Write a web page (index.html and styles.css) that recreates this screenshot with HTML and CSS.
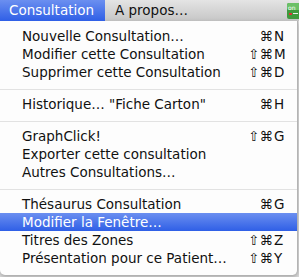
FILE: index.html
```html
<!DOCTYPE html>
<html>
<head>
<title>Menu Consultation</title>
<link rel="stylesheet" href="styles.css">
</head>
<body>

<div class="menubar">
  <span class="menu-title active">Consultation</span>
  <span class="menu-title">A propos…</span>
  <span class="app-icon">
    <svg width="12" height="16" viewBox="0 0 12 16">
      <rect x="0" y="0" width="14" height="16" rx="2" fill="#3f9a3c"/>
      <rect x="0" y="0" width="14" height="7" rx="2" fill="#6cc067"/>
      <text x="1" y="7" font-family="DejaVu Sans" font-size="6" fill="#fff">on</text>
      <rect x="2" y="10" width="3" height="2" fill="#d33"/>
      <rect x="6" y="10" width="5" height="1" fill="#e6f3e5"/>
    </svg>
  </span>
</div>

<ul class="menu">
  <li class="item"><span class="label">Nouvelle Consultation…</span><span class="keys"><span class="mods">⌘</span><span class="key">N</span></span></li>
  <li class="item"><span class="label">Modifier cette Consultation</span><span class="keys"><span class="mods">⇧⌘</span><span class="key">M</span></span></li>
  <li class="item"><span class="label">Supprimer cette Consultation</span><span class="keys"><span class="mods">⇧⌘</span><span class="key">D</span></span></li>
  <li class="sep"></li>
  <li class="item"><span class="label">Historique… "Fiche Carton"</span><span class="keys"><span class="mods">⌘</span><span class="key">H</span></span></li>
  <li class="sep"></li>
  <li class="item"><span class="label">GraphClick!</span><span class="keys"><span class="mods">⇧⌘</span><span class="key">G</span></span></li>
  <li class="item"><span class="label">Exporter cette consultation</span></li>
  <li class="item"><span class="label">Autres Consultations…</span></li>
  <li class="sep"></li>
  <li class="item"><span class="label">Thésaurus Consultation</span><span class="keys"><span class="mods">⌘</span><span class="key">G</span></span></li>
  <li class="item selected"><span class="label">Modifier la Fenêtre…</span></li>
  <li class="item"><span class="label">Titres des Zones</span><span class="keys"><span class="mods">⇧⌘</span><span class="key">Z</span></span></li>
  <li class="item"><span class="label">Présentation pour ce Patient…</span><span class="keys"><span class="mods">⇧⌘</span><span class="key">Y</span></span></li>
</ul>

</body>
</html>
```

FILE: styles.css
```css
body {
    margin: 0;
    width: 299px;
    height: 277px;
    overflow: hidden;
    background-color: #dcdcdc;
    font-family: "DejaVu Sans", sans-serif;
    font-size: 13.5px;
    color: #111;
}

.menubar {
    display: flex;
    align-items: stretch;
    height: 21px;
    background: linear-gradient(#e4e4e4, #c6c6c6);
}

.menu-title {
    padding: 0 10px;
    line-height: 20px;
    color: #111;
}

.menu-title.active {
    padding: 0 11px 0 9px;
    color: #fff;
    background: linear-gradient(#6b8ff0, #2f5fe6);
}

.app-icon {
    margin-left: auto;
    padding-top: 3px;
}

/* Dropdown panel */
.menu {
    list-style: none;
    margin: 0;
    padding: 6px 0 8px 0;
    width: 297px;
    background-color: #fdfdfd;
    border-right: 1px solid #b4b4b4;
    border-radius: 0 0 5px 5px;
    box-shadow: 0 2px 4px rgba(0, 0, 0, 0.25);
}

.item {
    display: flex;
    align-items: center;
    height: 18px;
    line-height: 18px;
    padding: 0 10px 0 22px;
    white-space: nowrap;
}

.item.selected {
    color: #fff;
    background: linear-gradient(#6b8ff0, #2f5fe6);
}

.keys {
    display: flex;
    margin-left: auto;
}

.mods {
    text-align: right;
}

.key {
    width: 13px;
    padding-left: 1px;
}

.sep {
    height: 1px;
    margin: 8px 0 5px 0;
    background-color: #e2e2e2;
}
```
